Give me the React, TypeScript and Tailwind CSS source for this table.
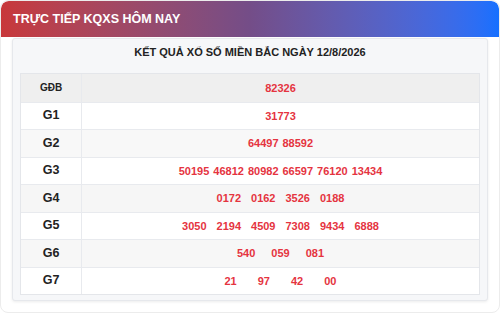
import React from 'react'

const rows: { label: string; nums: string[]; gap: string; bg: string }[] = [
  { label: 'GĐB', nums: ['82326'], gap: 'gap-[4px]', bg: 'bg-[#efefef]' },
  { label: 'G1', nums: ['31773'], gap: 'gap-[4px]', bg: 'bg-white' },
  { label: 'G2', nums: ['64497', '88592'], gap: 'gap-[4px]', bg: 'bg-[#f8f8f8]' },
  { label: 'G3', nums: ['50195', '46812', '80982', '66597', '76120', '13434'], gap: 'gap-[4px]', bg: 'bg-white' },
  { label: 'G4', nums: ['0172', '0162', '3526', '0188'], gap: 'gap-[10px]', bg: 'bg-[#f6f6f6]' },
  { label: 'G5', nums: ['3050', '2194', '4509', '7308', '9434', '6888'], gap: 'gap-[10px]', bg: 'bg-white' },
  { label: 'G6', nums: ['540', '059', '081'], gap: 'gap-[16px]', bg: 'bg-[#f7f7f7]' },
  { label: 'G7', nums: ['21', '97', '42', '00'], gap: 'gap-[21px]', bg: 'bg-white' },
]

export default function App() {
  return (
    <div className="w-[500px] h-[314px] bg-white font-['Liberation_Sans',Arial,sans-serif]">
      <div className="h-[313px] rounded-[8px] border border-[#ececec] bg-white overflow-hidden flex flex-col">
        {/* header */}
        <div className="h-[36px] shrink-0 flex items-center px-[12px] bg-gradient-to-r from-[#c8373a] via-[#744d88] to-[#1570ff] rounded-t-[8px]">
          <span className="text-white font-bold text-[12.5px]">TRỰC TIẾP KQXS HÔM NAY</span>
        </div>

        {/* result card */}
        <div className="mx-[11px] mt-[1px] h-[263px] bg-[#f6f7f9] border border-[#e6e8ec] rounded-[3px] shadow-[0_1px_3px_rgba(0,0,0,0.08)] px-[7px]">
          <div className="h-[26px] flex items-center justify-center text-[11px] font-bold text-[#222]">
            KẾT QUẢ XỔ SỐ MIỀN BẮC NGÀY 12/8/2026
          </div>
          <div className="mt-[8px] border border-[#e4e6ea]">
            {rows.map((r, i) => (
              <div
                key={r.label}
                className={`flex h-[27.5px] ${r.bg} ${i > 0 ? 'border-t border-[#e8eaee]' : ''}`}
              >
                <div
                  className={`w-[61px] shrink-0 border-r border-[#e8eaee] flex items-center justify-center font-bold text-[#222] ${
                    r.label === 'GĐB' ? 'text-[10px]' : 'text-[12.5px]'
                  }`}
                >
                  {r.label}
                </div>
                <div className={`flex-1 flex items-center justify-center ${r.gap} text-[11px] font-bold text-[#e5343f]`}>
                  {r.nums.map((n, j) => (
                    <span key={j}>{n}</span>
                  ))}
                </div>
              </div>
            ))}
          </div>
        </div>
      </div>
    </div>
  )
}
